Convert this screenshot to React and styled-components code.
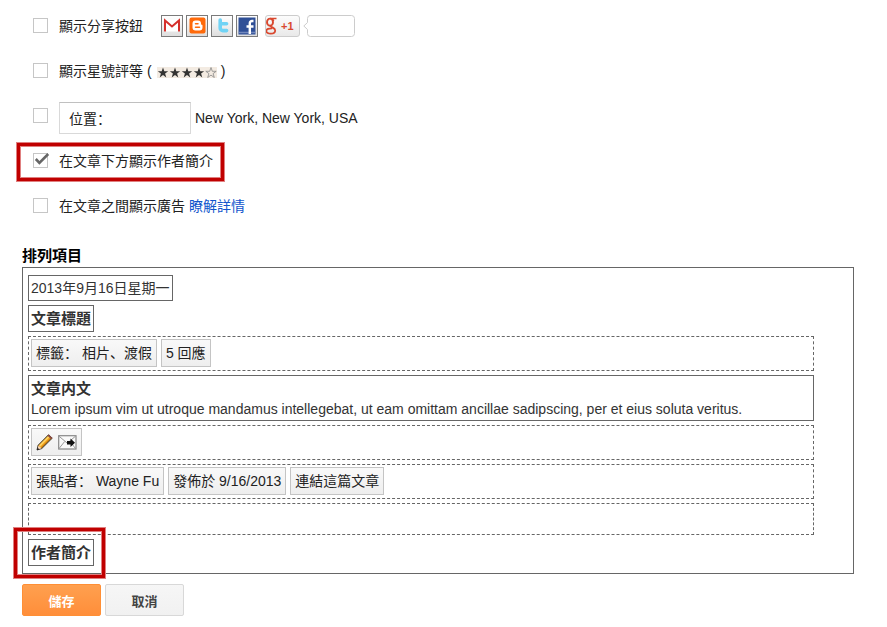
import React from 'react';
import styled, { createGlobalStyle } from 'styled-components';

const GlobalStyle = createGlobalStyle`
  * {
    box-sizing: border-box;
  }

  body {
    margin: 0;
    background: white;
    color: #222;
    font-family: "Liberation Sans", "Noto Sans CJK SC", sans-serif;
    font-size: 14px;
    line-height: 20px;
  }

  button,
  input {
    font-family: inherit;
  }
`;

const Page = styled.main`
  padding: 3px 33px 11px 22px;
`;

const Options = styled.div`
  padding-left: 11px;
`;

const Option = styled.div`
  position: relative;
  display: flex;
  align-items: center;
  height: 45px;
`;

const OptionBody = styled.div`
  display: flex;
  align-items: center;
  gap: 4px;
  margin-left: 11px;
  padding-top: ${({ $low }) => ($low ? '5px' : '0')};
  white-space: nowrap;
`;

const Tick = styled.span`
  position: relative;
  display: flex;

  svg {
    position: absolute;
    left: 0;
    top: 0;
    pointer-events: none;
    display: none;
  }

  input:checked + svg {
    display: block;
  }
`;

const TickInput = styled.input`
  appearance: none;
  width: 15px;
  height: 15px;
  margin: 0;
  border: 1px solid #c6c6c6;
  background: white;
`;

const Link = styled.a`
  color: #15c;
  text-decoration: none;
`;

const LocationInput = styled.input`
  width: 132px;
  height: 32px;
  padding: 0 9px;
  border: 1px solid #d9d9d9;
  border-top-color: #c0c0c0;
  color: #222;
  font-size: 14px;
`;

const ShareButtons = styled.div`
  display: flex;
  align-items: center;
  gap: 3px;
  margin-left: 14px;
`;

const ShareButton = styled.button`
  display: flex;
  align-items: center;
  justify-content: center;
  width: 22px;
  height: 22px;
  padding: 0;
  border: 1px solid #7a7a7a;
  background: linear-gradient(#fff, #dedede);
`;

const PlusOne = styled.button`
  display: flex;
  align-items: center;
  gap: 4px;
  width: 35px;
  height: 22px;
  margin-left: 4px;
  padding: 0;
  border: 1px solid #ccc;
  border-radius: 3px;
  background: linear-gradient(#fcfcfc, #e9e9e9);
  color: #d9482f;
  font-size: 11px;
  font-weight: bold;
`;

const Stars = styled.span`
  display: flex;
  margin: 3px 0 0 1px;
  background: #f3ebe2;
`;

const Callout = styled.div`
  position: absolute;
  left: ${({ $left }) => $left}px;
  top: ${({ $top }) => $top}px;
  width: ${({ $width }) => $width}px;
  height: ${({ $height }) => $height}px;
  border: 3px solid #c00000;
  box-shadow: 0 0 0 1px #e08080, inset 0 0 0 1px #e08080;
  pointer-events: none;
`;

const Heading = styled.h2`
  margin: 18px 0 1px;
  color: #000;
  font-size: 15px;
  line-height: 20px;
`;

const Panel = styled.section`
  display: flex;
  flex-direction: column;
  align-items: flex-start;
  gap: 4px;
  padding: 7px 39px 7px 5px;
  border: 1px solid #666;
  color: #333;
`;

const Item = styled.div`
  position: relative;
  padding: 2px;
  border: 1px solid #666;
  white-space: nowrap;
`;

const PostBody = styled(Item)`
  align-self: stretch;
  padding-bottom: 1px;
  white-space: normal;

  p {
    margin: 0;
  }
`;

const Title = styled.h3`
  margin: 0;
  font-size: 15px;
  line-height: 21px;
`;

const DropRow = styled.div`
  display: flex;
  align-items: flex-start;
  align-self: stretch;
  gap: 4px;
  height: ${({ $empty }) => ($empty ? '32px' : '35px')};
  padding: 2px;
  border: 1px dashed #666;
`;

const Chip = styled.div`
  display: flex;
  align-items: center;
  gap: 4px;
  height: 28px;
  padding: 0 4px;
  border: 1px solid #c4c4c4;
  background: linear-gradient(#f9f9f9, #eee);
  color: #222;
  white-space: pre;
`;

const Actions = styled.div`
  display: flex;
  gap: 4px;
  margin-top: 10px;
`;

const Button = styled.button`
  width: 79px;
  height: 32px;
  padding: 0;
  border: 1px solid ${({ $primary }) => ($primary ? '#ff8f35' : '#d8d8d8')};
  border-radius: 2px;
  background: ${({ $primary }) => (
    $primary ? 'linear-gradient(#ffa04f, #ff8e3a)' : 'linear-gradient(#f6f6f6, #f1f1f1)'
  )};
  color: ${({ $primary }) => ($primary ? 'white' : '#444')};
  font-size: 13px;
  font-weight: bold;
`;

const CheckBox = ({ id, ...props }) => (
  <Tick>
    <TickInput id={id} type="checkbox" {...props} />
    <svg width="17" height="15" viewBox="0 0 17 15" fill="none">
      <path d="M2.8 6L6.4 9.8L15.2 1" stroke="#666" strokeWidth="2.6" />
    </svg>
  </Tick>
);

const GmailIcon = () => (
  <svg width="18" height="17" viewBox="0 0 18 17" fill="none">
    <path d="M1 2.5H17V14.5H1Z" fill="white" />
    <path d="M2 14.5V3.5L9 9.5L16 3.5V14.5" stroke="#d5302c" strokeWidth="2" />
  </svg>
);

const BloggerIcon = () => (
  <svg width="17" height="17" viewBox="0 0 17 17" fill="none">
    <rect x="0.5" y="0.5" width="16" height="16" rx="2" fill="#ff6a0a" />
    <path
      d="M6.5 3.5H9a3 3 0 0 1 3 3c0 1.2.3 1.1 1 1.3.5.2.5.6.5 1v1.7a3 3 0 0 1-3 3h-4a3 3 0 0 1-3-3v-4a3 3 0 0 1 3-3Z"
      fill="white"
    />
    <path d="M6.5 6.8H9M6.5 10.3H10.5" stroke="#ff6a0a" strokeWidth="1.5" strokeLinecap="round" />
  </svg>
);

const TwitterIcon = () => (
  <svg width="17" height="17" viewBox="0 0 17 17" fill="none">
    <path
      d="M6.2 3V11a2.6 2.6 0 0 0 2.6 2.6H12.6M6.2 6.8H12.6"
      stroke="#70d3f5"
      strokeWidth="3.6"
      strokeLinecap="round"
      strokeLinejoin="round"
    />
  </svg>
);

const FacebookIcon = () => (
  <svg width="18" height="18" viewBox="0 0 18 18" fill="none">
    <rect x="0.5" y="0.5" width="17" height="17" fill="#2f4f96" />
    <path d="M1 15.5H17" stroke="#7288bd" strokeWidth="1.5" />
    <path d="M15.5 4H14a2.2 2.2 0 0 0-2.2 2.2V17M8.5 9.5H15.5" stroke="white" strokeWidth="2.4" />
  </svg>
);

const GoogleIcon = () => (
  <svg width="11" height="18" viewBox="0 0 11 18" fill="none" stroke="#d9482f">
    <ellipse cx="4" cy="5.2" rx="3" ry="3.6" strokeWidth="1.9" />
    <path d="M4 1.5H10.5M6.8 2.2L7.8 4" strokeWidth="1.3" />
    <path d="M5 8.6C3.8 10.2 9.2 10.5 9.2 13.4C9.2 17.8 .3 17.4 .3 14C.3 12 3 11.2 6.2 11.3" strokeWidth="1.8" />
  </svg>
);

const CountBubble = () => (
  <svg width="52" height="22" viewBox="0 0 52 22" fill="white" stroke="#ccc">
    <path d="M6.5 .5H48.5a3 3 0 0 1 3 3V18.5a3 3 0 0 1-3 3H7.5a3 3 0 0 1-3-3V14.5L.8 11L4.5 7.5V3.5a3 3 0 0 1 3-3Z" />
  </svg>
);

const starPath = 'M6 .5L7.3 4.3H11.2L8.1 6.6L9.3 10.5L6 8.1L2.7 10.5L3.9 6.6L.8 4.3H4.7Z';

const Star = ({ filled }) => (
  <svg width="12" height="11" viewBox="0 0 12 11">
    <path d={starPath} fill={filled ? '#333' : 'none'} stroke={filled ? 'none' : '#888'} strokeWidth="0.8" />
  </svg>
);

const PencilIcon = () => (
  <svg width="18" height="18" viewBox="0 0 18 18">
    <path d="M1 17L2.2 12.2L12.5 1.8L16.2 5.2L5.8 15.5Z" fill="#f4a91f" stroke="#333" />
    <path d="M3 12.5L12.7 2.7L13.8 3.7L4.2 13.5Z" fill="#ffd568" />
    <path d="M5 14.8L14.8 5" stroke="#b96b0b" />
    <path d="M11.5 2.8L12.8 1.5L16.5 5L15.2 6.3Z" fill="#8b4b42" />
    <path d="M1.5 16.5L2.5 12.7L5.5 15.3Z" fill="#f6d5bd" />
    <path d="M1 17L1.6 14.8L3.2 16.3Z" fill="#111" />
  </svg>
);

const MailIcon = () => (
  <svg width="19" height="15" viewBox="0 0 19 15" fill="none">
    <rect x="0.7" y="0.7" width="17.3" height="13.3" fill="#fafafa" stroke="#888" strokeWidth="1.2" />
    <path d="M1 1.2L9.3 8.2L17.5 1.2M1 13.5L6.7 6.5M17.5 13.5L12 6.5" stroke="#999" />
    <path d="M9 6H12.5V3.5L17 7.7L12.5 12V9.5H9Z" fill="#111" />
  </svg>
);

const App = () => (
  <>
    <GlobalStyle />
    <Page>
      <Options>
        <Option>
          <CheckBox id="share" />
          <OptionBody>
            <label htmlFor="share">顯示分享按鈕</label>
            <ShareButtons>
              <ShareButton aria-label="Gmail"><GmailIcon /></ShareButton>
              <ShareButton aria-label="Blogger"><BloggerIcon /></ShareButton>
              <ShareButton aria-label="Twitter"><TwitterIcon /></ShareButton>
              <ShareButton aria-label="Facebook"><FacebookIcon /></ShareButton>
              <PlusOne>
                <GoogleIcon />
                +1
              </PlusOne>
              <CountBubble />
            </ShareButtons>
          </OptionBody>
        </Option>
        <Option>
          <CheckBox id="stars" />
          <OptionBody>
            <label htmlFor="stars">顯示星號評等</label>
            <span>(</span>
            <Stars>
              {[1, 2, 3, 4, 5].map(n => <Star key={n} filled={n < 5} />)}
            </Stars>
            <span>)</span>
          </OptionBody>
        </Option>
        <Option>
          <CheckBox id="location" aria-label="位置" />
          <OptionBody $low>
            <LocationInput aria-label="位置" defaultValue="位置：" />
            <span>New York, New York, USA</span>
          </OptionBody>
        </Option>
        <Option>
          <CheckBox id="author" defaultChecked />
          <OptionBody>
            <label htmlFor="author">在文章下方顯示作者簡介</label>
          </OptionBody>
          <Callout $left={-16} $top={5} $width={207} $height={38} />
        </Option>
        <Option>
          <CheckBox id="ads" />
          <OptionBody>
            <label htmlFor="ads">在文章之間顯示廣告</label>
            <Link href="#learn">瞭解詳情</Link>
          </OptionBody>
        </Option>
      </Options>

      <Heading>排列項目</Heading>
      <Panel>
        <Item>2013年9月16日星期一</Item>
        <Item>
          <Title>文章標題</Title>
        </Item>
        <DropRow>
          <Chip>標籤： 相片、渡假</Chip>
          <Chip>5 回應</Chip>
        </DropRow>
        <PostBody>
          <Title>文章内文</Title>
          <p>Lorem ipsum vim ut utroque mandamus intellegebat, ut eam omittam ancillae sadipscing, per et eius soluta veritus.</p>
        </PostBody>
        <DropRow>
          <Chip>
            <PencilIcon />
            <MailIcon />
          </Chip>
        </DropRow>
        <DropRow>
          <Chip>張貼者： Wayne Fu</Chip>
          <Chip>發佈於 9/16/2013</Chip>
          <Chip>連結這篇文章</Chip>
        </DropRow>
        <DropRow $empty />
        <Item>
          <Title>作者簡介</Title>
          <Callout $left={-15} $top={-12} $width={91} $height={50} />
        </Item>
      </Panel>

      <Actions>
        <Button $primary>儲存</Button>
        <Button>取消</Button>
      </Actions>
    </Page>
  </>
);

export default App;
